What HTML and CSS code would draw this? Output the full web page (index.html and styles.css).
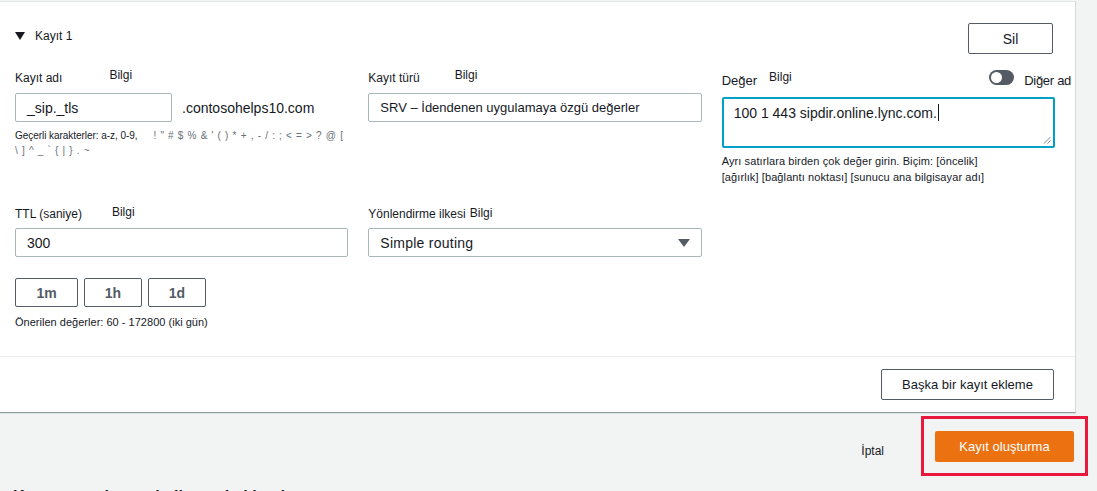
FILE: index.html
```html
<!DOCTYPE html>
<html lang="tr">
<head>
<meta charset="utf-8">
<title>Kayıt oluşturma</title>
<link rel="stylesheet" href="styles.css">
</head>
<body>
<div class="card">
  <div class="card-body">
    <div class="record-head">
      <div class="record-title">
        <span class="caret-down"></span>
        <span>Kayıt 1</span>
      </div>
      <button class="btn btn-sil">Sil</button>
    </div>

    <div class="grid">
      <div class="field">
        <div class="label-row">
          <span class="label">Kayıt adı</span>
          <span class="info info-name">Bilgi</span>
        </div>
        <div class="name-row">
          <div class="input input-name">_sip._tls</div>
          <span class="domain">.contosohelps10.com</span>
        </div>
        <div class="hint-small">
          <span class="hint-dark">Geçerli karakterler: a-z, 0-9,</span><span class="hint-grey hint-chars">! " # $ % &amp; ' ( ) * + , - / : ; &lt; = &gt; ? @ [</span><br>
          <span class="hint-grey">\ ] ^ _ ` { | } . ~</span>
        </div>
      </div>

      <div class="field">
        <div class="label-row">
          <span class="label">Kayıt türü</span>
          <span class="info info-type">Bilgi</span>
        </div>
        <div class="input input-wide input-type">SRV – İdendenen uygulamaya özgü değerler</div>
      </div>

      <div class="field">
        <div class="label-row label-row-value">
          <div class="label-group">
            <span class="label label-value">Değer</span>
            <span class="info info-value">Bilgi</span>
          </div>
          <div class="alias">
            <span class="toggle"><span class="knob"></span></span>
            <span class="alias-text">Diğer ad</span>
          </div>
        </div>
        <div class="textarea">
          <span>100 1 443 sipdir.online.lync.com.</span><span class="text-caret"></span>
          <svg class="grip" width="8" height="8" viewBox="0 0 8 8"><path d="M7.5 1 L1 7.5 M7.5 4.5 L4.5 7.5" stroke="#7d8998" stroke-width="1" fill="none"/></svg>
        </div>
        <div class="hint-value">Ayrı satırlara birden çok değer girin. Biçim: [öncelik]<br>[ağırlık] [bağlantı noktası] [sunucu ana bilgisayar adı]</div>
      </div>

      <div class="field field-row2">
        <div class="label-row">
          <span class="label">TTL (saniye)</span>
          <span class="info info-ttl">Bilgi</span>
        </div>
        <div class="input input-wide">300</div>
        <div class="ttl-buttons">
          <button class="btn btn-ttl btn-1m">1m</button>
          <button class="btn btn-ttl">1h</button>
          <button class="btn btn-ttl">1d</button>
        </div>
        <div class="hint-suggest">Önerilen değerler: 60 - 172800 (iki gün)</div>
      </div>

      <div class="field field-row2">
        <div class="label-row">
          <span class="label">Yönlendirme ilkesi</span>
          <span class="info info-route">Bilgi</span>
        </div>
        <div class="input input-wide select">
          <span>Simple routing</span>
          <svg width="12" height="8" viewBox="0 0 12 8"><path d="M0 0 H12 L6 8 Z" fill="#545b64"/></svg>
        </div>
      </div>
    </div>
  </div>
  <div class="card-footer">
    <button class="btn btn-add">Başka bir kayıt ekleme</button>
  </div>
</div>

<div class="actions">
  <span class="cancel">İptal</span>
  <div class="highlight">
    <button class="btn-primary">Kayıt oluşturma</button>
  </div>
</div>
<div class="next-heading">Kayıt ayrıntıları ve kullanım hakkında</div>
</body>
</html>
```
FILE: styles.css
```css
* { box-sizing: border-box; }
html, body { margin: 0; padding: 0; }
body {
  background: #f2f3f3;
  font-family: "Liberation Sans", Arial, sans-serif;
  color: #16191f;
  height: 491px;
  overflow: hidden;
  padding-top: 1px;
}

.card {
  width: 1076px;
  background: #fff;
  border-top: 1px solid #e6e9e9;
  border-right: 1px solid #d5dbdb;
  border-bottom: 1px solid #8f9a9b;
  box-shadow: 0 1px 0 #dde2e2;
}
.card-body {
  padding: 21px 20px 26px 15px;
}

.record-head {
  display: flex;
  justify-content: space-between;
  align-items: flex-start;
  height: 31px;
}
.record-title {
  display: flex;
  align-items: center;
  gap: 10px;
  font-size: 12px;
  margin-top: 6px;
}
.caret-down {
  width: 0; height: 0;
  border-left: 5px solid transparent;
  border-right: 5px solid transparent;
  border-top: 8px solid #16191f;
}

.btn {
  font-family: "Liberation Sans", Arial, sans-serif;
  background: #fff;
  border: 1px solid #545b64;
  border-radius: 2px;
  color: #16191f;
  padding: 0;
  cursor: pointer;
}
.btn-sil {
  width: 85px;
  height: 31px;
  font-size: 14px;
  margin-right: 2px;
}

.grid {
  margin-top: 14px;
  display: grid;
  grid-template-columns: repeat(3, 1fr);
  column-gap: 20px;
  row-gap: 19px;
}
.field { display: flex; flex-direction: column; align-items: flex-start; }

.label-row {
  display: flex;
  align-items: center;
  height: 20px;
  width: 100%;
}
.label { font-size: 12px; }
.info { font-size: 12px; margin-bottom: 6px; }
.info-name { margin-left: 47px; }
.info-type { margin-left: 35px; }
.info-ttl { margin-left: 30px; margin-bottom: 4px; }
.info-route { margin-left: 4px; margin-bottom: 2px; }

.label-row-value {
  height: 24px;
  justify-content: space-between;
}
.label-group { display: flex; align-items: center; }
.label-value { font-size: 13px; }
.info-value { margin-left: 12px; }
.alias {
  display: flex;
  align-items: center;
  margin-right: -16px;
  margin-bottom: 5px;
}
.toggle {
  width: 25px;
  height: 15px;
  border-radius: 8px;
  background: #545b64;
  display: flex;
  align-items: center;
  padding-left: 2px;
}
.knob {
  width: 11px; height: 11px;
  border-radius: 50%;
  background: #fff;
}
.alias-text { font-size: 13px; margin-left: 10px; margin-top: 5px; letter-spacing: -0.3px; }

.input {
  height: 29px;
  border: 1px solid #aab7b8;
  border-radius: 2px;
  display: flex;
  align-items: center;
  padding-left: 11px;
  font-size: 14px;
  margin-top: 5px;
}
.name-row { display: flex; align-items: center; gap: 10px; }
.input-name { width: 157px; }
.domain { font-size: 14px; margin-top: 5px; }
.input-wide { width: 100%; }
.input-type { font-size: 13px; }

.hint-small {
  margin-top: 6px;
  font-size: 10px;
  line-height: 15px;
}
.hint-dark { letter-spacing: -0.05px; }
.hint-grey { color: #687078; letter-spacing: 0.7px; }
.hint-chars { margin-left: 16px; }

.textarea {
  position: relative;
  width: 100%;
  height: 51px;
  margin-top: 5px;
  border: 2px solid #00a1c9;
  border-radius: 2px;
  padding: 5px 10px;
  font-size: 14px;
  line-height: 18px;
  display: flex;
  align-items: flex-start;
}
.text-caret {
  display: inline-block;
  width: 1px;
  height: 17px;
  background: #16191f;
  margin-left: 1px;
}
.grip { position: absolute; right: 2px; bottom: 2px; }
.hint-value {
  margin-top: 5px;
  font-size: 11px;
  line-height: 16px;
  letter-spacing: 0.1px;
}

.field-row2 .input { margin-top: 4px; }
.ttl-buttons { display: flex; gap: 6px; margin-top: 21px; }
.btn-ttl {
  width: 58px;
  height: 29px;
  font-size: 14px;
  font-weight: bold;
  color: #545b64;
}
.btn-1m { width: 63px; }
.hint-suggest {
  margin-top: 8px;
  font-size: 11px;
  line-height: 15px;
  letter-spacing: 0.02px;
}

.select {
  justify-content: space-between;
  padding-right: 11px;
  font-size: 14px;
  letter-spacing: 0.25px;
}

.card-footer {
  border-top: 1px solid #eaeded;
  padding: 12px 21px 12px 0;
  display: flex;
  justify-content: flex-end;
}
.btn-add {
  width: 173px;
  height: 31px;
  font-size: 13px;
}

.actions {
  margin-top: 3px;
  display: flex;
  justify-content: flex-end;
  align-items: center;
  padding-right: 9px;
}
.cancel { font-size: 12px; margin-right: 37px; margin-top: 10px; }
.highlight {
  border: 3px solid #e8193c;
  padding: 12px 11px 11px 11px;
}
.btn-primary {
  display: block;
  width: 139px;
  height: 31px;
  background: #ec7211;
  color: #fff;
  border: none;
  border-radius: 2px;
  font-family: "Liberation Sans", Arial, sans-serif;
  font-size: 13px;
  padding: 0;
}
.next-heading {
  margin: 11px 0 0 13px;
  font-size: 16px;
  font-weight: bold;
  line-height: 20px;
  color: #16191f;
}
```
